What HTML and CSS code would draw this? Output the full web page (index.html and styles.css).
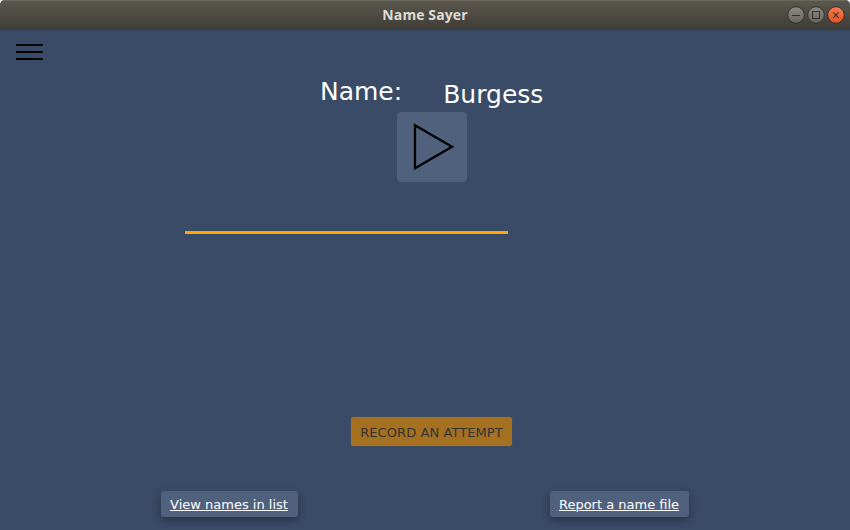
FILE: index.html
```html
<!DOCTYPE html>
<html lang="en">
<head>
<meta charset="utf-8">
<title>Name Sayer</title>
<link rel="stylesheet" href="styles.css">
</head>
<body>
<div class="window">
  <header class="titlebar">
    <h1 class="title">Name Sayer</h1>
    <div class="controls">
      <svg class="control" viewBox="0 0 18 18">
        <defs>
          <linearGradient id="gray" x2="0" y2="1"><stop offset="0" stop-color="#8d8b83"/><stop offset="1" stop-color="#67655e"/></linearGradient>
          <linearGradient id="orange" x2="0" y2="1"><stop offset="0" stop-color="#f87b51"/><stop offset="1" stop-color="#e3511f"/></linearGradient>
        </defs>
        <circle class="ring" cx="9" cy="9" r="8.3"/><path class="glyph" d="M5 9.5h8"/>
      </svg>
      <svg class="control" viewBox="0 0 18 18"><circle class="ring" cx="9" cy="9" r="8.3"/><path class="glyph" d="M5.5 5.5h7v7h-7z"/></svg>
      <svg class="control" viewBox="0 0 18 18"><circle class="ring close" cx="9" cy="9" r="8.3"/><path class="glyph" d="M6.2 6.4l5.4 5.4M11.6 6.4l-5.4 5.4"/></svg>
    </div>
  </header>
  <main class="content">
    <button class="menu" aria-label="Menu">
      <span class="menu-line"></span><span class="menu-line"></span><span class="menu-line"></span>
    </button>
    <div class="name-row">
      <span class="label">Name:</span>
      <span class="name">Burgess</span>
    </div>
    <button class="play" aria-label="Play">
      <svg class="play-icon" viewBox="0 0 70 70"><path d="M18 13.2V56.3L55 34.7Z"/></svg>
    </button>
    <div class="progress"></div>
    <button class="record">RECORD AN ATTEMPT</button>
    <footer class="footer">
      <button class="link-button">View names in list</button>
      <button class="link-button">Report a name file</button>
    </footer>
  </main>
</div>
</body>
</html>
```
FILE: styles.css
```css
* { box-sizing: border-box; }
body { margin: 0; background: #fff; font-family: "DejaVu Sans", sans-serif; }
button { margin: 0; padding: 0; border: 0; font-family: inherit; }
.window {
  display: flex;
  flex-direction: column;
  width: 850px;
  height: 530px;
  overflow: hidden;
  border-radius: 5px 5px 0 0;
  background: #394b66;
}
.titlebar {
  display: grid;
  grid-template-columns: 1fr auto 1fr;
  align-items: center;
  flex: none;
  height: 30px;
  padding: 0 5px;
  background: linear-gradient(#5b584e, #3e3d37);
  box-shadow: inset 0 1px #6b685e;
}
.title {
  grid-column: 2;
  margin: 0;
  font: bold 14px/20px "Open Sans", sans-serif;
  letter-spacing: .1px;
  color: #dfdbd2;
}
.controls { display: flex; justify-content: flex-end; gap: 2px; }
.control { width: 18px; height: 18px; }
.ring { fill: url(#gray); stroke: #33322d; }
.ring.close { fill: url(#orange); }
.glyph { fill: none; stroke: #34332e; stroke-width: 1.1; }
.content { display: flex; flex-direction: column; flex: 1; }
.menu {
  display: flex;
  flex-direction: column;
  gap: 5px;
  width: 27px;
  margin: 14px 0 0 16px;
  background: none;
}
.menu-line { height: 2px; background: #000; border-radius: 0 1px 1px 0; }
.name-row {
  display: flex;
  gap: 41px;
  height: 52px;
  padding: 17px 0 0 320px;
  font-size: 25px;
  line-height: 29px;
  color: #fff;
}
.name { margin-top: 3px; }
.play {
  width: 70px;
  height: 70px;
  margin-left: 397px;
  border-radius: 4px;
  background: #50617d;
}
.play-icon { display: block; width: 70px; height: 70px; fill: none; stroke: #000; stroke-width: 2.3; }
.progress { width: 323px; height: 3px; margin: 49px 0 0 185px; background: #ffa500; }
.record {
  width: 161px;
  height: 29px;
  margin: 183px 0 0 351px;
  padding-top: 2px;
  border-radius: 3px;
  background: #a57120;
  box-shadow: 0 0 1px #a57120;
  font-size: 13px;
  line-height: 27px;
  letter-spacing: .08px;
  color: #333;
}
.footer { display: flex; gap: 252px; margin: 45px 0 0 161px; }
.link-button {
  width: 137px;
  height: 26px;
  padding-right: 1px;
  border-radius: 3px;
  background: #50617d;
  box-shadow: 0 3px 9px rgba(0, 0, 0, .32);
  font-size: 13px;
  color: #fff;
  text-decoration: underline 1px;
  text-underline-offset: 1px;
  white-space: nowrap;
}
.link-button + .link-button { width: 139px; }
```
